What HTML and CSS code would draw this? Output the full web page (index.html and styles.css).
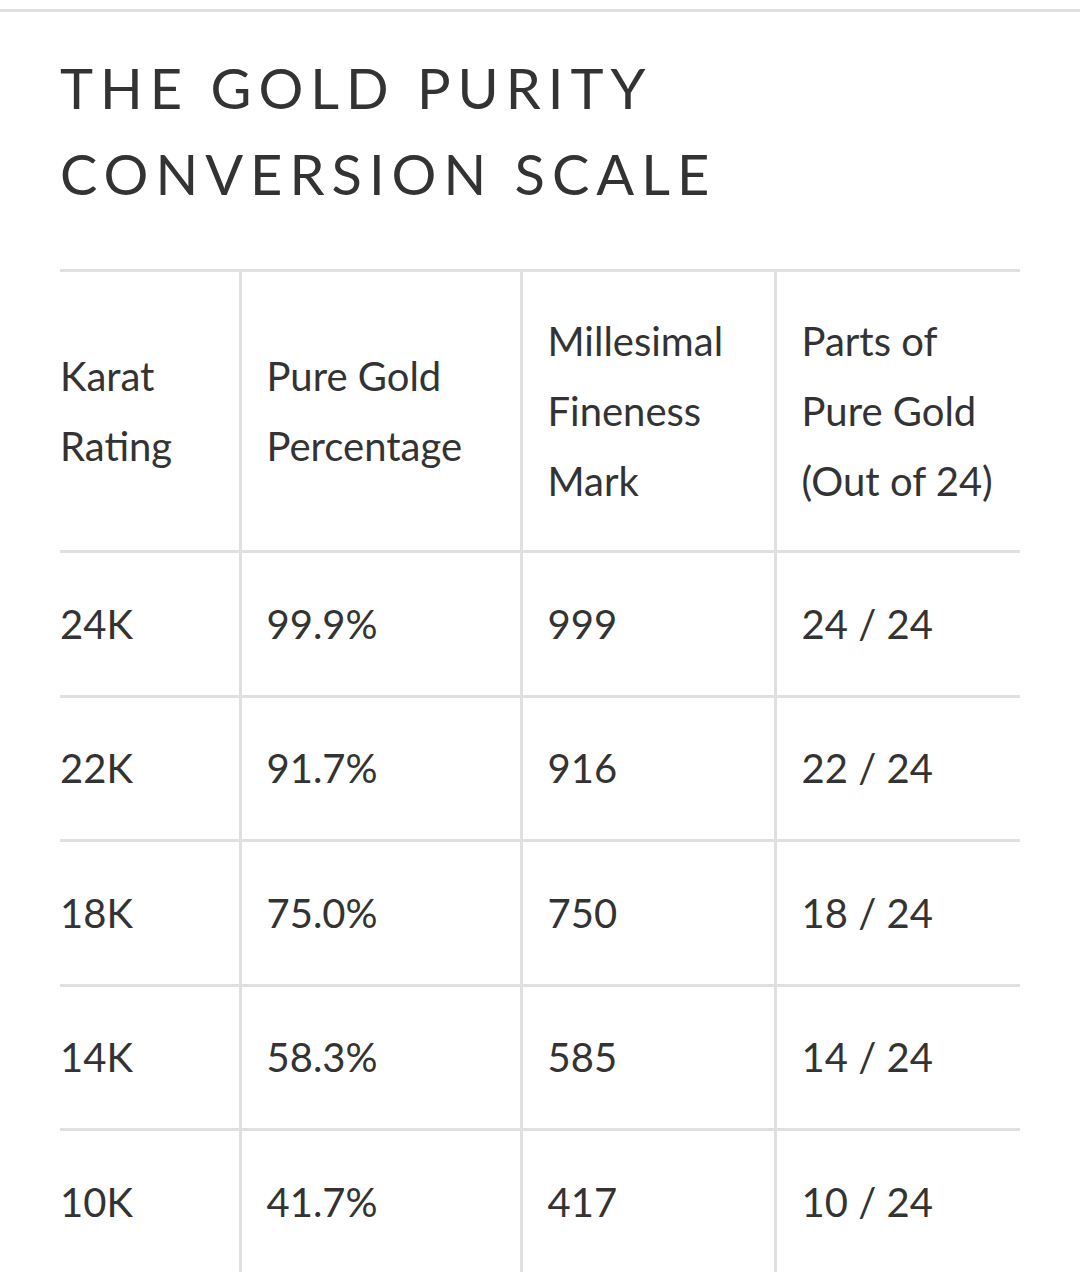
FILE: index.html
```html
<!DOCTYPE html>
<html lang="en">
<head>
<meta charset="utf-8">
<title>The Gold Purity Conversion Scale</title>
<link rel="stylesheet" href="styles.css">
</head>
<body>
<section class="purity">
  <h2 class="purity-title">The Gold Purity Conversion Scale</h2>
  <table class="purity-table">
    <colgroup>
      <col class="c1"><col class="c2"><col class="c3"><col class="c4">
    </colgroup>
    <thead>
      <tr>
        <th>Karat<br>Rating</th>
        <th>Pure Gold<br>Percentage</th>
        <th>Millesimal<br>Fineness<br>Mark</th>
        <th>Parts of<br>Pure Gold<br>(Out of 24)</th>
      </tr>
    </thead>
    <tbody>
      <tr><td>24K</td><td>99.9%</td><td>999</td><td>24 / 24</td></tr>
      <tr><td>22K</td><td>91.7%</td><td>916</td><td>22 / 24</td></tr>
      <tr><td>18K</td><td>75.0%</td><td>750</td><td>18 / 24</td></tr>
      <tr><td>14K</td><td>58.3%</td><td>585</td><td>14 / 24</td></tr>
      <tr><td>10K</td><td>41.7%</td><td>417</td><td>10 / 24</td></tr>
    </tbody>
  </table>
</section>
</body>
</html>
```

FILE: styles.css
```css
html, body {
  margin: 0;
  padding: 0;
  background: #ffffff;
}
body {
  padding-top: 9px;
  font-family: "Lato", "Noto Sans", sans-serif;
  color: #333333;
}
.purity {
  border-top: 3px solid #e0e0e0;
  padding: 33px 60px 0 60px;
}
.purity-title {
  margin: 0 0 52px 0;
  font-weight: 400;
  font-size: 56px;
  line-height: 86px;
  letter-spacing: 7px;
  text-transform: uppercase;
  color: #333333;
}
.purity-table {
  width: 960px;
  border-collapse: collapse;
  table-layout: fixed;
  font-size: 40px;
  line-height: 70px;
}
.c1 { width: 180px; }
.c2 { width: 281px; }
.c3 { width: 254px; }
.c4 { width: 245px; }
.purity-table th,
.purity-table td {
  font-weight: 400;
  text-align: left;
  vertical-align: middle;
  padding: 35.75px 20px 35.75px 25px;
  border-top: 3px solid #e0e0e0;
  border-left: 3px solid #e0e0e0;
}
.purity-table th:first-child,
.purity-table td:first-child {
  border-left: none;
  padding-left: 0;
}
.purity-table th {
  padding-top: 34px;
  padding-bottom: 34px;
}
```
